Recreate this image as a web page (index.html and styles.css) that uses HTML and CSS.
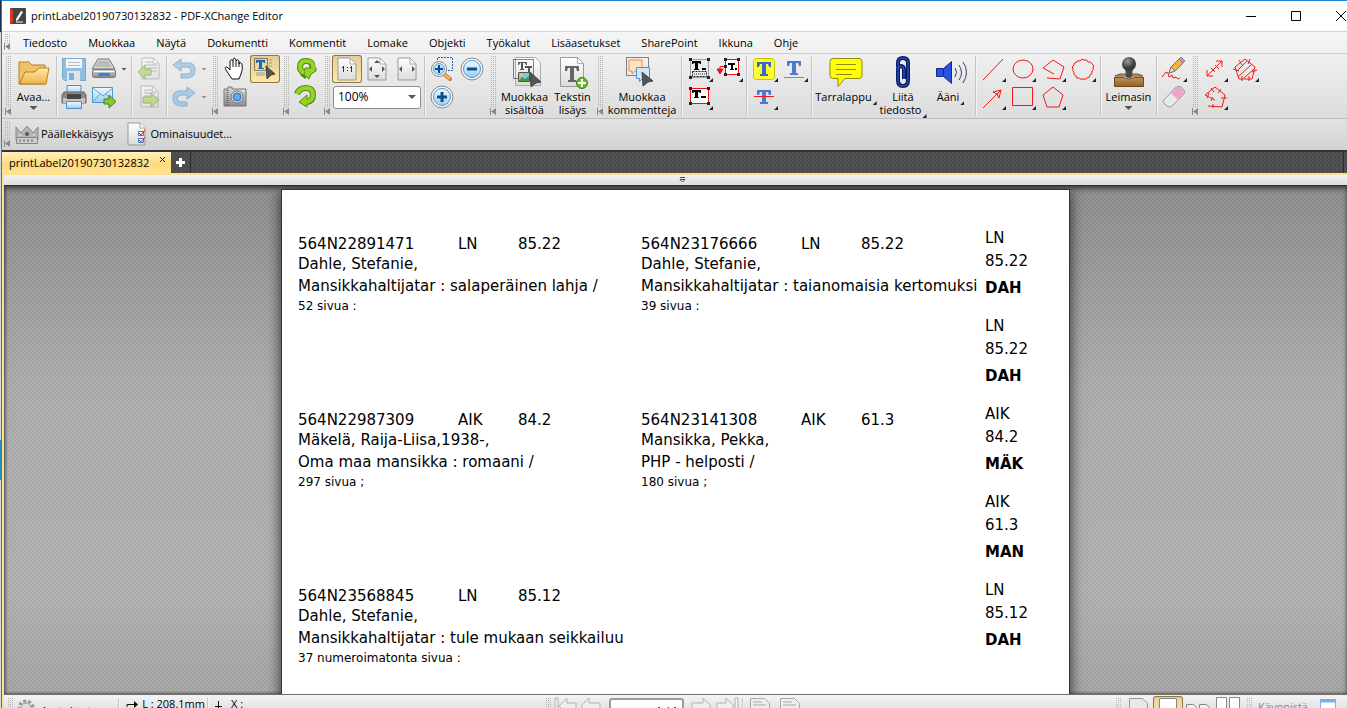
FILE: index.html
```html
<!DOCTYPE html>
<html lang="fi">
<head>
<meta charset="utf-8">
<title>printLabel20190730132832 - PDF-XChange Editor</title>
<link rel="stylesheet" href="styles.css">
</head>
<body>
<svg class="defs" aria-hidden="true">
  <defs>
    <linearGradient id="folder" x2="0" y2="1"><stop stop-color="#ffe9a8"/><stop offset="1" stop-color="#efb24b"/></linearGradient>
    <linearGradient id="metal" x2="0" y2="1"><stop stop-color="#d8d8d8"/><stop offset="1" stop-color="#8c8c8c"/></linearGradient>
    <linearGradient id="sky" x2="0" y2="1"><stop stop-color="#f2faff"/><stop offset="1" stop-color="#9ccdf2"/></linearGradient>
    <linearGradient id="wood" x2="0" y2="1"><stop stop-color="#c49355"/><stop offset="1" stop-color="#8d5f28"/></linearGradient>
    <radialGradient id="knob" cx=".4" cy=".3"><stop stop-color="#999"/><stop offset="1" stop-color="#3a3a3a"/></radialGradient>
    <linearGradient id="sheet" x2="0" y2="1"><stop stop-color="#fff"/><stop offset="1" stop-color="#dcdcdc"/></linearGradient>
    <symbol id="corner" viewBox="0 0 4 4"><path d="M4 0v4H0z" fill="#222"/></symbol>
    <symbol id="page" viewBox="0 0 20 24"><path d="M1 1h12l6 6v16H1z" fill="url(#sheet)" stroke="#999"/><path d="M13 1v6h6z" fill="#fff" stroke="#aaa"/></symbol>
    <symbol id="cursor" viewBox="0 0 11 15"><path d="M1 1l9 8-4 1-4 4z" fill="#555" stroke="#444"/></symbol>
  </defs>
</svg>
<div class="window">
  <header class="titlebar">
    <svg class="app-icon" viewBox="0 0 16 16"><rect width="16" height="16" rx="1" fill="#444"/><path d="M0 1h3v14H0z" fill="#d43a1c"/><path d="M6 11l5-8 2 1-5 8-2 1z" fill="#fff"/><path d="M6 14h7" stroke="#fff"/></svg>
    <h1 class="title">printLabel20190730132832 - PDF-XChange Editor</h1>
    <div class="window-buttons">
      <button aria-label="Pienennä"><svg viewBox="0 0 12 12"><path d="M1 6.500h10" stroke="#000"/></svg></button>
      <button aria-label="Suurenna"><svg viewBox="0 0 12 12"><path d="M1.500 1.500h9v9h-9z" stroke="#000" fill="none"/></svg></button>
      <button aria-label="Sulje"><svg viewBox="0 0 12 12"><path d="M1 1l10 10M11 1L1 11" stroke="#000"/></svg></button>
    </div>
  </header>

  <nav class="menubar">
    <span class="grip"></span>
    <button>Tiedosto</button><button>Muokkaa</button><button>Näytä</button><button>Dokumentti</button><button>Kommentit</button><button>Lomake</button><button>Objekti</button><button>Työkalut</button><button>Lisäasetukset</button><button>SharePoint</button><button>Ikkuna</button><button>Ohje</button>
  </nav>

  <div class="toolbar">
    <span class="grip"></span>
    <button class="big open">
      <svg class="big-icon" viewBox="0 0 36 35"><path d="M3 29V7h10l3 3h13v19z" fill="#efc168" stroke="#b97f1e"/><path d="M4 28L9 17h10l4-4h10l-3 16H4z" fill="url(#folder)" stroke="#b97f1e"/></svg>
      <span>Avaa...</span><span class="drop"></span>
    </button>
    <span class="sep"></span>
    <div class="tools files">
      <button aria-label="Tallenna"><svg viewBox="0 0 30 28"><path d="M3.500 3.500h23v22h-21l-2-2z" fill="#8fbfe2" stroke="#78a7cc"/><path d="M7 4h16v9H7z" fill="#f6f6f6"/><path d="M9 7.500h12M9 10.500h12" stroke="#bbb"/><path d="M8 16h13v10H8z" fill="#e3e3e3"/><path d="M10 18h5v7h-5z" fill="#7fb0d6"/></svg></button>
      <button aria-label="Skannaa"><svg viewBox="0 0 30 28"><path d="M9 4h11l6 10H3z" fill="#d4d4d4" stroke="#777"/><path d="M10 6h9l4 6H6z" fill="#bbb"/><rect x="3.500" y="14.500" width="23" height="8" rx="2" fill="url(#metal)" stroke="#777"/><path d="M5 16.500h20" stroke="#fff"/><path d="M10 18h10l2 3H9z" fill="#2b84e0"/></svg></button>
      <button class="narrow" aria-label="Skannausasetukset"><span class="drop"></span></button>
      <button aria-label="Tulosta"><svg viewBox="0 0 30 28"><path d="M8 2.500h14v8H8z" fill="url(#sky)" stroke="#4a8fc7"/><path d="M5 9h20l2 3v8H3v-8z" fill="#8a8a8a" stroke="#666"/><path d="M4 15h22v5H4z" fill="#c4c4c4"/><path d="M8 11h14v5H8z" fill="#444"/><path d="M7.500 18.500h15v7h-15z" fill="url(#sky)" stroke="#4a8fc7"/></svg></button>
      <button aria-label="Lähetä"><svg viewBox="0 0 30 28"><path d="M3.500 4.500h20v15h-20z" fill="url(#sky)" stroke="#4a9bd4"/><path d="M4 5l10 8 10-8M4 19l7-8M23 19l-6-8" fill="none" stroke="#5aa7dd"/><path d="M15 16h5v-4l7 6.500-7 6.500v-4h-5z" fill="#8cc63f" stroke="#43820d"/></svg></button>
    </div>
    <span class="sep"></span>
    <div class="tools col faded">
      <button aria-label="Edellinen asiakirja"><svg viewBox="0 0 30 28"><use href="#page" x="7" y="2" width="19" height="23"/><path d="M11 7h8M11 10h12M11 13h12M15 16h8" stroke="#999"/><path d="M17 14h-6v-4l-7 7 7 7v-4h6z" fill="#a9d25e" stroke="#67992c"/></svg></button>
      <button aria-label="Seuraava asiakirja"><svg viewBox="0 0 30 28"><use href="#page" x="6" y="2" width="19" height="23"/><path d="M10 7h8M10 10h11M10 13h6" stroke="#999"/><path d="M9 14h8v-4l8 7-8 7v-4H9z" fill="#a9d25e" stroke="#67992c"/></svg></button>
    </div>
    <span class="sep"></span>
    <div class="tools undo faded">
      <button aria-label="Kumoa"><svg viewBox="0 0 30 28"><path d="M4 10l8-6v4h8q6 0 6 7 0 8-8 8h-6v-4h6q4 0 4-3 0-4-4-4h-6v4z" fill="#86bbe6" stroke="#4e8dc2"/></svg></button>
      <button class="narrow" aria-label="Kumoamishistoria"><span class="drop"></span></button>
      <button aria-label="Toista"><svg viewBox="0 0 30 28"><path d="M26 10l-8-6v4h-8q-6 0-6 7 0 8 8 8h6v-4h-6q-4 0-4-3 0-4 4-4h6v4z" fill="#86bbe6" stroke="#4e8dc2"/></svg></button>
      <button class="narrow" aria-label="Toistohistoria"><span class="drop"></span></button>
    </div>
    <span class="grip"></span>
    <div class="tools two">
      <button aria-label="Käsityökalu"><svg viewBox="0 0 30 28"><path d="M10 21l-4-6q-2-3 1-3l3 3V6q1-3 3 0v-1q1-4 3 0v1q1-3 3 0v3q1-3 3 0 1 6-1 10l-2 5h-7z" fill="#fff" stroke="#111"/><path d="M13 6v6M16 6v6M19 7v5" stroke="#111"/></svg></button>
      <button class="active" aria-label="Valitse teksti"><svg viewBox="0 0 30 28"><path d="M4.500 3.500h13v12h-13z" fill="none" stroke="#222" stroke-dasharray="1 1"/><path d="M6 5h9v3h-1l-1-1h-1v6h2v1H8v-1h1V7H8L7 8H6z" fill="#1769b5"/><path d="M19 5h3M19 8h3M19 11h3M6 18h9M6 20h9" stroke="#999"/><use href="#cursor" x="15" y="10" width="11" height="15"/></svg></button>
      <button aria-label="Tilannekuva"><svg viewBox="0 0 30 28"><path d="M4 6h4V4h4v2h14v17H4z" fill="url(#metal)" stroke="#777"/><path d="M7.500 7v15" stroke="#666" stroke-dasharray="1 1" stroke-width="2"/><circle cx="17" cy="14" r="6" fill="#ddd" stroke="#777"/><circle cx="17" cy="14" r="4" fill="#5ca9f2" stroke="#2f6dae"/><path d="M22 8h3" stroke="#fff"/></svg></button>
    </div>
    <span class="grip"></span>
    <div class="tools col">
      <button aria-label="Kierrä vastapäivään"><svg viewBox="0 0 30 28"><path d="M21 15q2-9-6-9-6 0-6 6 0 4 4 6" fill="none" stroke="#4d8a10" stroke-width="6"/><path d="M14 15l4 3-4 6-5-4z" fill="#4d8a10"/><path d="M14 13h11v3l-5 3-2 5-5-4z" fill="#97d320" stroke="#4d8a10"/><path d="M22 14q1-8-7-8-6 0-6 6 0 4 4 6" fill="none" stroke="#97d320" stroke-width="4"/></svg></button>
      <button aria-label="Kierrä myötäpäivään"><svg viewBox="0 0 30 28"><path d="M6 11q2-6 9-6 7 0 7 7 0 6-6 7" fill="none" stroke="#4d8a10" stroke-width="6"/><path d="M8 19l8-7v12z" fill="#97d320" stroke="#4d8a10"/><path d="M6 11q2-6 9-6 7 0 7 7 0 6-7 7" fill="none" stroke="#97d320" stroke-width="4"/></svg></button>
    </div>
    <span class="grip"></span>
    <div class="tools zoom">
      <button class="active" aria-label="Todellinen koko"><svg viewBox="0 0 30 28"><use href="#page" x="5" y="2" width="20" height="24"/><path d="M11.500 11v6M19.500 11v6" stroke="#333"/><path d="M10 12.500h1M18 12.500h1M15 12.500h1M15 15.500h1" stroke="#333"/></svg></button>
      <button aria-label="Sovita sivu"><svg viewBox="0 0 30 28"><use href="#page" x="5" y="2" width="20" height="24"/><path d="M15 5l3 3h-6zM15 23l3-3h-6zM7 14l3-3v6zM23 14l-3-3v6z" fill="#555"/></svg></button>
      <button aria-label="Sovita leveys"><svg viewBox="0 0 30 28"><use href="#page" x="5" y="2" width="20" height="24"/><path d="M7 14l3-3v6zM23 14l-3-3v6z" fill="#555"/></svg></button>
      <div class="zoom-box"><select aria-label="Suurennus"><option>100%</option></select><span class="drop"></span></div>
    </div>
    <span class="sep"></span>
    <div class="tools two">
      <button aria-label="Zoomausalue"><svg viewBox="0 0 30 28"><path d="M10.500 14V2.500h15v13H18" fill="none" stroke="#1769b5" stroke-dasharray="2 1"/><path d="M17 19l6 5" stroke="#c87d1a" stroke-width="4" stroke-linecap="round"/><path d="M17 19l6 5" stroke="#f6c069" stroke-width="2"/><circle cx="12" cy="14" r="7.500" fill="#fff" stroke="#888"/><circle cx="12" cy="14" r="5.500" fill="#b9defa" stroke="#5ba0d8"/><path d="M8 14h8M12 10v8" stroke="#0c4f88" stroke-width="2"/></svg></button>
      <button aria-label="Loitonna"><svg viewBox="0 0 30 28"><circle cx="15" cy="14" r="11" fill="#f6f6f6" stroke="#888"/><circle cx="15" cy="14" r="8.500" fill="url(#sky)" stroke="#4a9be0"/><path d="M10 14h10" stroke="#0c4f88" stroke-width="3"/></svg></button>
      <button aria-label="Lähennä"><svg viewBox="0 0 30 28"><circle cx="15" cy="14" r="11" fill="#f6f6f6" stroke="#888"/><circle cx="15" cy="14" r="8.500" fill="url(#sky)" stroke="#4a9be0"/><path d="M10 14h10M15 9v10" stroke="#0c4f88" stroke-width="3"/></svg></button>
    </div>
    <span class="grip"></span>
    <button class="big content">
      <svg class="big-icon" viewBox="0 0 36 35"><path d="M8.500 2.500h20l5 5v23h-25z" fill="url(#sheet)" stroke="#aaa"/><path d="M6.500 4.500h20v19h-20z" fill="none" stroke="#111" stroke-dasharray="1 1"/><path d="M11 7h9v3h-1l-1-2h-2v6h1v1h-4v-1h1V8h-1l-1 2h-1zM18 11h7v2h-2v5h-2v-5h-3z" fill="#555"/><path d="M11.500 17.500h11v9h-11z" fill="#7cc6f5" stroke="#555"/><path d="M12 26l3-4 3 2 4-3v5z" fill="#4c9a2a"/><circle cx="14.500" cy="20" r="1.500" fill="#fc3"/><path d="M23 17l11 10-5 1-5 4z" fill="#555" stroke="#444"/></svg>
      <span>Muokkaa</span><span>sisältöä</span>
    </button>
    <button class="big addtext">
      <svg class="big-icon" viewBox="0 0 36 35"><path d="M5.500 2.500h17l6 6v23h-23z" fill="url(#sheet)" stroke="#999"/><path d="M22.500 2.500v6h6z" fill="#fff" stroke="#aaa"/><path d="M10 11h14v5h-2l-1-3h-2v12h2v2h-8v-2h2V13h-2l-1 3h-2z" fill="#666"/><circle cx="27" cy="28" r="5.500" fill="#6cb82b" stroke="#3f8410"/><path d="M23 28h8M27 24v8" stroke="#fff" stroke-width="2"/></svg>
      <span>Tekstin</span><span>lisäys</span>
    </button>
    <span class="grip"></span>
    <button class="big comments">
      <svg class="big-icon" viewBox="0 0 36 35"><path d="M2.500 2.500h22v18h-22z" fill="none" stroke="#111" stroke-dasharray="1 1"/><path d="M5 5h13v11h-7l-3 3v-3H5z" fill="#ffe3c4" stroke="#ec8a3c"/><path d="M12.500 12.500h13v11h-7l-3 3v-3h-3z" fill="#cfe8fb" stroke="#4a93cf"/><path d="M18 17l11 9-5 1-5 4z" fill="#555" stroke="#444"/></svg>
      <span>Muokkaa</span><span>kommentteja</span>
    </button>
    <span class="sep"></span>
    <div class="tools two">
      <button aria-label="Tekstikenttä"><svg viewBox="0 0 30 28"><path d="M6.500 4.500h18v18h-18z" fill="none" stroke="#555" stroke-dasharray="1 1"/><path d="M8 6h9v3h-1l-1-1h-1v6h1v1h-5v-1h1V8h-1l-1 1H8zM18 13h4v2h-4z" fill="#000"/><path d="M8.500 16.500h14v5h-14z" fill="#eee" stroke="#222" stroke-dasharray="2 1"/><path d="M10 19h11" stroke="#222" stroke-dasharray="1 1"/><path d="M5 3h3v3H5zM23 3h3v3h-3zM5 21h3v3H5zM23 21h3v3h-3z" fill="#222"/><use href="#corner" x="25" y="23" width="4" height="4"/></svg></button>
      <button aria-label="Selite"><svg viewBox="0 0 30 28"><path d="M11.500 4.500h13v15h-13z" fill="#fff" stroke="#e11"/><path d="M11 11.500H6V18" fill="none" stroke="#e11"/><path d="M3 14l3 5 3-5z" fill="#e11" stroke="#e11"/><path d="M14 8h7v2h-2v4h1v1h-4v-1h1v-4h-3zM21 13h2v2h-2z" fill="#000"/><path d="M10 3h3v3h-3zM23 3h3v3h-3zM10 18h3v3h-3zM23 18h3v3h-3zM10 10h3v3h-3z" fill="#222"/><use href="#corner" x="25" y="23" width="4" height="4"/></svg></button>
      <button aria-label="Tekstiruutu"><svg viewBox="0 0 30 28"><path d="M6.500 5.500h18v15h-18z" fill="#fff" stroke="#e11"/><path d="M8 7h9v3h-1l-1-1h-1v5h1v1h-5v-1h1V9h-1l-1 1H8zM17 13h5v2h-5z" fill="#000"/><path d="M5 4h3v3H5zM23 4h3v3h-3zM5 19h3v3H5zM23 19h3v3h-3z" fill="#222"/><use href="#corner" x="25" y="23" width="4" height="4"/></svg></button>
    </div>
    <span class="sep"></span>
    <div class="tools two">
      <button aria-label="Korosta"><svg viewBox="0 0 30 28"><rect x="4.500" y="3.500" width="21" height="21" rx="3" fill="#ffff30" stroke="#c6c600"/><path d="M8 7h14v5h-2l-1-3h-2v10h2v2h-8v-2h2V9h-2l-1 3H8z" fill="#3b66c4"/><use href="#corner" x="25" y="23" width="4" height="4"/></svg></button>
      <button aria-label="Alleviivaa"><svg viewBox="0 0 30 28"><path d="M8 6h14v5h-2l-1-3h-2v10h2v2h-8v-2h2V8h-2l-1 3H8z" fill="#4d7bd0"/><rect x="5" y="22" width="20" height="1" fill="#1fd51f"/><use href="#corner" x="25" y="23" width="4" height="4"/></svg></button>
      <button aria-label="Yliviivaa"><svg viewBox="0 0 30 28"><path d="M8 7h14v5h-2l-1-3h-2v10h2v2h-8v-2h2V9h-2l-1 3H8z" fill="#4d7bd0"/><rect x="5" y="13" width="20" height="1" fill="#f01818"/><use href="#corner" x="25" y="23" width="4" height="4"/></svg></button>
    </div>
    <span class="sep"></span>
    <button class="big note">
      <svg class="big-icon" viewBox="0 0 36 35"><path d="M5 3.500h26q3 0 3 3v14q0 3-3 3H17l-7 8v-8H5q-3 0-3-3v-14q0-3 3-3z" fill="#ff0" stroke="#8c8c10"/><path d="M8 9.500h20M8 14.500h20M8 19.500h16" stroke="#8c8c10"/></svg>
      <span>Tarralappu<i class="tri"></i></span>
    </button>
    <button class="big attach">
      <svg class="big-icon" viewBox="0 0 36 35"><path d="M13 12V8q0-5 5-5t5 5v17q0 6-5 6t-5-6V15q0-4 3-4t3 4v9" fill="none" stroke="#0a1a66" stroke-width="4"/><path d="M13 12V8q0-5 5-5t5 5v17q0 6-5 6t-5-6V15q0-4 3-4t3 4v9" fill="none" stroke="#3f5fd8" stroke-width="1"/></svg>
      <span>Liitä</span><span>tiedosto<i class="tri"></i></span>
    </button>
    <button class="big sound">
      <svg class="big-icon" viewBox="0 0 36 35"><path d="M3.500 13.500h7l8-7v22l-8-7h-7z" fill="#2c50e0" stroke="#142a90"/><path d="M10.500 14v7" stroke="#142a90"/><path d="M22 13q3 4 0 9M26 10q5 8 0 15M30 7q7 10 0 21" fill="none" stroke="#34406f"/></svg>
      <span>Ääni<i class="tri"></i></span>
    </button>
    <span class="sep"></span>
    <div class="tools four red">
      <button aria-label="Viiva"><svg viewBox="0 0 30 28"><path d="M5 25L25 4"/><use href="#corner" x="24" y="23" width="4" height="4"/></svg></button>
      <button aria-label="Ellipsi"><svg viewBox="0 0 30 28"><ellipse cx="15" cy="14" rx="10" ry="9"/><use href="#corner" x="24" y="23" width="4" height="4"/></svg></button>
      <button aria-label="Murtoviiva"><svg viewBox="0 0 30 28"><path d="M16 19L5 13l10-8 11 7-4 12-13-1"/><use href="#corner" x="24" y="23" width="4" height="4"/></svg></button>
      <button aria-label="Pilvi"><svg viewBox="0 0 30 28"><path d="M12 6q2-3 4-1 3-1 4 2 3-1 4 2 3 1 1 4 1 2-1 3 1 3-2 4 0 3-3 3-1 2-4 1-2 1-4-1-3 1-3-2-3-1-2-4-2-1-1-3-2-3 1-4 0-3 3-3 0-2 3-1z"/><use href="#corner" x="24" y="23" width="4" height="4"/></svg></button>
      <button aria-label="Nuoli"><svg viewBox="0 0 30 28"><path d="M5 25L23 7M15 9l8-2-2 8M15 9l4 2 2 4"/><use href="#corner" x="24" y="23" width="4" height="4"/></svg></button>
      <button aria-label="Suorakulmio"><svg viewBox="0 0 30 28"><path d="M4.500 4.500h20v18h-20z"/><use href="#corner" x="24" y="23" width="4" height="4"/></svg></button>
      <button aria-label="Monikulmio"><svg viewBox="0 0 30 28"><path d="M15 4l10 8-4 12H9L5 12z"/><use href="#corner" x="24" y="23" width="4" height="4"/></svg></button>
    </div>
    <span class="sep"></span>
    <button class="big stamp">
      <svg class="big-icon" viewBox="0 0 36 35"><path d="M4 21l5-2h18l5 2z" fill="#caa06a" stroke="#7a5322"/><path d="M14 12h8l-1 10q-3 2-6 0z" fill="#4a4a4a"/><circle cx="18" cy="9" r="7" fill="url(#knob)"/><path d="M3.500 22.500h9q5 3 11 0h9v9h-29z" fill="url(#wood)" stroke="#70491a"/></svg>
      <span>Leimasin</span><span class="drop"></span>
    </button>
    <span class="sep"></span>
    <div class="tools col">
      <button aria-label="Kynä"><svg viewBox="0 0 30 28"><path d="M12 12l8-8 4 4-8 8-6 2z" fill="#f5b342" stroke="#9a6a1d"/><path d="M20 4l2-2 4 4-2 2z" fill="#d58ac0" stroke="#888"/><path d="M10 18l2-6 4 4z" fill="#f7ddb0" stroke="#777"/><path d="M3 22l4-5 2 1 1 4 3-2 1 3 3-1 2 2 2-1" fill="none" stroke="#f01818"/><use href="#corner" x="24" y="23" width="4" height="4"/></svg></button>
      <button aria-label="Pyyhekumi"><svg viewBox="0 0 30 28"><path d="M5 17L16 5q3-3 6-1l3 3q2 2-1 5L13 23q-3 2-5 0l-3-3q-2-1 0-3z" fill="#e9e9e9" stroke="#999"/><path d="M12 10l5-5q3-2 5 0l2 2q2 2-1 5l-4 5z" fill="#f2a3c8"/></svg></button>
    </div>
    <span class="grip"></span>
    <div class="tools two red">
      <button aria-label="Etäisyys"><svg viewBox="0 0 30 28"><path d="M7 21L22 6M16 6h6v6M7 15v6h6M11 13l4 4M15 10l4 4"/><use href="#corner" x="24" y="23" width="4" height="4"/></svg></button>
      <button aria-label="Pinta-ala"><svg viewBox="0 0 30 28"><path d="M15 4l10 8-3 12H9L5 12z"/><path d="M6 17L17 6M8 22L22 9M14 23l10-9M9 5l3 5M20 4l-2 5M3 14l6 2M12 21v5M19 21v5M22 17l5-2"/><use href="#corner" x="25" y="23" width="4" height="4"/></svg></button>
      <button aria-label="Piiri"><svg viewBox="0 0 30 28"><path d="M15 17L5 12l10-8 10 8-3 12-14-1M11 5l3 4M21 6l-3 4M9 10l-2 5M13 14l-2 4M21 15h6M13 21v4"/><use href="#corner" x="24" y="23" width="4" height="4"/></svg></button>
    </div>
  </div>

  <div class="toolbar2">
    <span class="grip"></span>
    <button class="labelled"><svg class="crown" viewBox="0 0 24 24"><path d="M1 18V5l5 6 6-7 6 7 5-6v13z" fill="#b4b4b4" stroke="#888"/><circle cx="12" cy="12" r="2" fill="#555"/><circle cx="5" cy="13" r="1" fill="#ddd"/><circle cx="19" cy="13" r="1" fill="#ddd"/><path d="M1.500 15.500h21v6h-21z" fill="#ccc" stroke="#888"/><path d="M4 18.500h16" stroke="#888" stroke-width="2" stroke-dasharray="2 2"/></svg>Päällekkäisyys</button>
    <button class="labelled"><svg class="props" viewBox="0 0 20 24"><path d="M1 1h12l5 5v17H1z" fill="url(#sheet)" stroke="#999"/><path d="M13 1v5h5" fill="#fff" stroke="#aaa"/><path d="M11.500 9.500h5v4h-5zM11.500 16.500h5v4h-5z" fill="#fff" stroke="#3d7fc2"/><path d="M12 11l2 2 4-5M12 18l2 2 4-5" fill="none" stroke="#e11"/></svg>Ominaisuudet...</button>
  </div>

  <div class="tabbar">
    <div class="tab"><span>printLabel20190730132832</span><button class="tab-close" aria-label="Sulje välilehti"><svg viewBox="0 0 7 7"><path d="M1 1l5 5M6 1L1 6" stroke="#222"/></svg></button></div>
    <button class="tab-add" aria-label="Uusi välilehti"><svg viewBox="0 0 9 9"><path d="M0 4.500h9M4.500 0v9" stroke="#fff" stroke-width="3"/></svg></button>
    <span class="tab-end"></span>
  </div>

  <main class="workspace">
    <div class="ruler"><svg viewBox="0 0 7 6"><path d="M1 .5h5M1 2.500h5L3.500 5z" stroke="#444" fill="#fff"/></svg></div>
    <div class="canvas">
      <article class="page">
        <div class="labels">
          <section class="card"><p class="head"><span>564N22891471</span><span>LN</span><span>85.22</span></p><p>Dahle, Stefanie,</p><p class="name">Mansikkahaltijatar : salaperäinen lahja /</p><p class="pages">52 sivua :</p></section>
          <section class="card"><p class="head"><span>564N23176666</span><span>LN</span><span>85.22</span></p><p>Dahle, Stefanie,</p><p class="name">Mansikkahaltijatar : taianomaisia kertomuksi</p><p class="pages">39 sivua :</p></section>
          <section class="card"><p class="head"><span>564N22987309</span><span>AIK</span><span>84.2</span></p><p>Mäkelä, Raija-Liisa,1938-,</p><p class="name">Oma maa mansikka : romaani /</p><p class="pages">297 sivua ;</p></section>
          <section class="card"><p class="head"><span>564N23141308</span><span>AIK</span><span>61.3</span></p><p>Mansikka, Pekka,</p><p class="name">PHP - helposti /</p><p class="pages">180 sivua ;</p></section>
          <section class="card"><p class="head"><span>564N23568845</span><span>LN</span><span>85.12</span></p><p>Dahle, Stefanie,</p><p class="name">Mansikkahaltijatar : tule mukaan seikkailuu</p><p class="pages">37 numeroimatonta sivua :</p></section>
        </div>
        <div class="spines">
          <div class="spine"><p>LN</p><p>85.22</p><p class="key">DAH</p></div>
          <div class="spine"><p>LN</p><p>85.22</p><p class="key">DAH</p></div>
          <div class="spine"><p>AIK</p><p>84.2</p><p class="key">MÄK</p></div>
          <div class="spine"><p>AIK</p><p>61.3</p><p class="key">MAN</p></div>
          <div class="spine"><p>LN</p><p>85.12</p><p class="key">DAH</p></div>
        </div>
      </article>
    </div>
    <footer class="statusbar">
      <div class="status-left">
        <span class="grip"></span>
        <button class="options"><svg viewBox="0 0 18 18"><circle cx="9" cy="9" r="7" fill="none" stroke="#999" stroke-width="3" stroke-dasharray="3 2"/><circle cx="9" cy="9" r="5" fill="#ddd" stroke="#999"/></svg><span>Asetukset</span></button>
        <span class="sep"></span>
        <span class="measure"><svg viewBox="0 0 12 12"><path d="M1 11V8.500h8" fill="none" stroke="#111"/><path d="M8 5l4 3.500L8 12z" fill="#111"/></svg>L : 208.1mm</span>
        <span class="sep"></span>
        <span class="measure"><svg viewBox="0 0 12 12"><path d="M3.500 5v7M0 10.500h7" stroke="#111"/></svg>X :</span>
      </div>
      <div class="status-mid">
        <span class="grip"></span>
        <button aria-label="Ensimmäinen sivu"><svg viewBox="0 0 26 18"><path d="M2 3h3v14H2zM6 11l8-8v5h9v7h-9v4z" fill="#eee" stroke="#b4b4b4"/></svg></button>
        <button aria-label="Edellinen sivu"><svg viewBox="0 0 26 18"><path d="M2 11l8-8v5h11v7H10v4z" fill="#eee" stroke="#b4b4b4"/></svg></button>
        <input class="page-number" aria-label="Sivu" value="1 / 1">
        <button aria-label="Seuraava sivu"><svg viewBox="0 0 26 18"><path d="M23 11l-8-8v5H4v7h11v4z" fill="#eee" stroke="#b4b4b4"/></svg></button>
        <button aria-label="Viimeinen sivu"><svg viewBox="0 0 26 18"><path d="M21 3h3v14h-3zM20 11l-8-8v5H3v7h9v4z" fill="#eee" stroke="#b4b4b4"/></svg></button>
        <span class="sep"></span>
        <button class="view" aria-label="Edellinen näkymä"><svg viewBox="0 0 30 18"><path d="M5.500 3.500h14l5 5v12h-19z" fill="#eee" stroke="#aaa"/><path d="M8 7h9M8 10h13" stroke="#aaa"/></svg></button>
        <button class="view" aria-label="Seuraava näkymä"><svg viewBox="0 0 30 18"><path d="M5.500 3.500h14l5 5v12h-19z" fill="#eee" stroke="#aaa"/><path d="M8 7h9M8 10h13" stroke="#aaa"/></svg></button>
      </div>
      <div class="status-right">
        <span class="grip"></span>
        <button class="view" aria-label="Yksi sivu"><svg viewBox="0 0 30 18"><path d="M6.500 3.500h13l5 5v12h-18z" fill="#e8e8e8" stroke="#999"/></svg></button>
        <button class="view active" aria-label="Jatkuva"><svg viewBox="0 0 30 18"><path d="M6.500 2.500h17v16h-17z" fill="#fff" stroke="#888"/></svg></button>
        <button class="view" aria-label="Kaksi sivua"><svg viewBox="0 0 30 18"><path d="M3.500 9.500h7l3 3v8h-10zM16.500 9.500h7l3 3v8h-10z" fill="#eee" stroke="#888"/></svg></button>
        <button class="view" aria-label="Kaksi sivua jatkuva"><svg viewBox="0 0 30 18"><path d="M3.500 2.500h10v16h-10zM16.500 2.500h10v16h-10z" fill="#fff" stroke="#888"/></svg></button>
        <span class="grip"></span>
        <button class="launch">Käynnistä<svg viewBox="0 0 16 16"><path d="M.5.500h15v15H.5z" fill="#fff" stroke="#7ab0e4"/><path d="M0 2h16" stroke="#7ab0e4" stroke-width="3"/></svg></button>
      </div>
    </footer>
  </main>
</div>
</body>
</html>
```
FILE: styles.css
```css
* { box-sizing: border-box; }
body {
  margin: 0;
  height: 100vh;
  padding-left: 1px;
  overflow: hidden;
  background: linear-gradient(#1b2c4a 32px, #cfd9e3 32px, #cfd9e3 440px, #2090b8 440px, #2090b8 480px, #cfd9e3 480px);
  font: 11px/16px "Open Sans", sans-serif;
  color: #000;
}
p, h1 { margin: 0; }
button, input, select { font: inherit; color: inherit; }
button { display: flex; align-items: center; padding: 0; border: 0; background: none; white-space: nowrap; }
svg { display: block; flex: none; }
.defs { position: absolute; width: 0; height: 0; }

.window {
  display: flex;
  flex-direction: column;
  height: 100vh;
  border-top: 1px solid #1883d7;
  border-left: 1px solid #1883d7;
}
.titlebar { display: flex; align-items: center; flex: none; height: 30px; padding-left: 8px; background: #fff; }
.app-icon { width: 16px; height: 16px; }
.title { margin-left: 5px; font-size: 11px; font-weight: 400; }
.window-buttons { display: flex; gap: 33px; margin: 0 0 0 auto; }
.window-buttons svg { width: 12px; height: 12px; }

.menubar {
  display: flex;
  flex: none;
  height: 22px;
  border-top: 1px solid #d4d4d4;
  background: linear-gradient(#f6f6f6, #efefef);
}
.menubar button { margin-right: 21px; }

/* Dotted drag handle with a collapse mark at its foot */
.grip {
  position: relative;
  flex: none;
  width: 7px;
  margin: 2px 1px 2px 3px;
  background: conic-gradient(#b4b4b4 25%, transparent 0) 0 0 / 2px 2px;
}
.menubar .grip, .toolbar .grip, .toolbar2 .grip { border-bottom: 8px solid transparent; background-clip: padding-box; }
.toolbar > .grip:first-child, .toolbar2 .grip { margin-left: 2px; }
.menubar .grip { margin: 2px 12px 2px 2px; }
.menubar .grip::after, .toolbar .grip::after, .toolbar2 .grip::after {
  content: "";
  position: absolute;
  left: 0;
  bottom: -7px;
  width: 6px;
  height: 7px;
  background: #888;
  clip-path: polygon(0 0, 1px 0, 1px 50%, 100% 0, 100% 100%, 1px 50%, 1px 100%, 0 100%);
}

.toolbar {
  display: flex;
  flex: none;
  height: 65px;
  padding-left: 1px;
  border-top: 1px solid #cfcfcf;
  background: linear-gradient(#f0f0f0, #dcdcdc);
}
.sep { flex: none; width: 1px; margin: 2px; background: #c4c4c4; box-shadow: 1px 0 #f4f4f4; }
.tools { display: grid; flex: none; grid-auto-rows: 28px; align-content: start; padding-top: 1px; }
.tools button { justify-content: center; height: 28px; }
.tools button > svg { width: 30px; height: 28px; }
.files { grid-template-columns: 30px 30px 10px; }
.undo { grid-template-columns: 30px 10px; }
.col { grid-template-columns: 30px; }
.two { grid-template-columns: 30px 30px; }
.four { grid-template-columns: 30px 30px 30px 30px; }
.zoom { grid-template-columns: 30px 30px 30px; }
.faded { opacity: .6; }
.red path, .red ellipse { fill: none; stroke: #f01818; }
.active {
  border-radius: 3px;
  background: linear-gradient(#e3cd9a, #ffe7a3);
  box-shadow: inset 0 0 0 1px #8b7748;
}
.drop { width: 6px; height: 3px; margin: 0 auto; background: #555; clip-path: polygon(0 0, 100% 0, 50% 100%); }

.zoom-box { position: relative; grid-column: span 3; display: flex; align-items: center; padding: 3px 1px; }
.zoom-box select { appearance: none; width: 100%; height: 23px; padding: 0 4px; border: 1px solid #8e8e8e; border-radius: 3px; background: #fff; font-size: 12px; }
.zoom-box .drop { position: absolute; right: 6px; width: 8px; height: 4px; }

.big { flex: none; flex-direction: column; align-items: center; padding-top: 1px; line-height: 13px; }
.big-icon { width: 36px; height: 35px; }
.big .drop { width: 8px; height: 4px; margin-top: 3px; }
.open { width: 41px; }
.content { width: 53px; }
.addtext { width: 43px; }
.comments { width: 74px; }
.note { width: 64px; }
.attach { width: 50px; }
.sound { width: 45px; }
.stamp { width: 51px; }
.tri { display: inline-block; width: 4px; height: 4px; margin-left: 1px; vertical-align: -4px; background: #222; clip-path: polygon(100% 0, 100% 100%, 0 100%); }

.toolbar2 {
  display: flex;
  flex: none;
  height: 32px;
  border-top: 1px solid #bdbdbd;
  background: linear-gradient(#e2e2e2, #d2d2d2);
}
.labelled { margin: 0 10px 0 3px; padding-bottom: 2px; }
.crown { width: 24px; height: 24px; margin-right: 2px; }
.props { width: 20px; height: 24px; margin-right: 4px; }

.tabbar {
  display: flex;
  flex: none;
  height: 23px;
  border-top: 2px solid #333;
  background-color: #4c4c4c;
  background-image: conic-gradient(#545454 25%, #4a4a4a 0 50%, #505050 0 75%, #484848 0);
  background-size: 4px 4px;
}
.tab { display: flex; align-items: center; width: 169px; padding-left: 7px; background: linear-gradient(#fff0c0, #ffda7c 60%, #ffe495); }
.tab-close { margin: 0 5px 6px auto; }
.tab-close svg { width: 7px; height: 7px; }
.tab-add { justify-content: center; width: 20px; border-right: 1px solid #2c2c2c; }
.tab-add svg { width: 9px; height: 9px; }
.tab-end { width: 4px; margin-left: auto; border-left: 1px solid #2c2c2c; }

.workspace { display: flex; flex: 1; flex-direction: column; min-height: 0; border: solid #ffe08e; border-width: 2px 0 0 2px; }
.ruler { display: flex; flex: none; align-items: center; justify-content: center; height: 10px; padding-left: 14px; background: linear-gradient(#f2f2f2, #dedede); }
.ruler svg { width: 7px; height: 6px; }
.canvas {
  display: flex;
  flex: 1;
  justify-content: center;
  min-height: 0;
  overflow: hidden;
  padding-top: 4px;
  border-top: 1px solid #2d2d2d;
  background:
    conic-gradient(rgba(255, 255, 255, .05) 25%, rgba(0, 0, 0, .03) 0 50%, rgba(255, 255, 255, .05) 0 75%, rgba(0, 0, 0, .03) 0) 0 0 / 4px 4px,
    linear-gradient(#8c8c8c, #acacac 40%, #b0b0b0 80%, #a4a4a4);
  box-shadow: inset 0 3px 5px rgba(0, 0, 0, .5), inset 1px -1px 3px rgba(0, 0, 0, .4);
}
.page {
  display: flex;
  flex: none;
  width: 787px;
  height: 1123px;
  padding: 0 16px;
  background: #fff;
  box-shadow: 0 0 0 1px #333, 0 4px 12px 2px rgba(0, 0, 0, .65);
  font: 15px/20px "DejaVu Sans", sans-serif;
  white-space: nowrap;
}
.labels { display: grid; flex: none; grid-template-columns: 343px 344px; grid-auto-rows: 176px; align-content: start; padding-top: 44px; }
.head { display: grid; grid-template-columns: 160px 60px auto; }
.name { line-height: 24px; }
.pages { font-size: 12px; line-height: 16px; }
.spines { display: flex; flex-direction: column; gap: 12px; padding-top: 37px; }
.spine { line-height: 23px; }
.key { font-weight: 700; line-height: 30px; }

.statusbar {
  display: flex;
  flex: none;
  justify-content: space-between;
  align-items: flex-start;
  height: 14px;
  overflow: hidden;
  border-top: 1px solid #6e6e6e;
  background: linear-gradient(#f4f4f4, #e4e4e4);
}
.statusbar > div { display: flex; align-items: flex-start; height: 26px; }
.statusbar .grip, .statusbar .sep { align-self: stretch; margin-top: 3px; }
.options span { padding-top: 8px; }
.options svg { width: 18px; height: 18px; margin: 2px 6px 0 2px; }
.options + .sep { margin-left: 27px; }
.measure { display: flex; padding: 1px 0 0 5px; }
.measure svg { width: 12px; height: 12px; margin-right: 4px; }
.status-mid { padding-right: 8px; }
.status-mid svg { width: 26px; height: 18px; }
.page-number { width: 75px; height: 24px; margin: 3px 4px 0; padding: 0 4px; border: 2px solid #9a9a9a; border-radius: 3px; background: #fff; text-align: right; }
.view svg, .status-mid .view svg { width: 30px; height: 18px; }
.view.active { margin-top: 1px; }
.launch { gap: 12px; margin: 4px 11px 0 4px; color: #7b8ba8; }
.launch svg { width: 16px; height: 16px; }
```
